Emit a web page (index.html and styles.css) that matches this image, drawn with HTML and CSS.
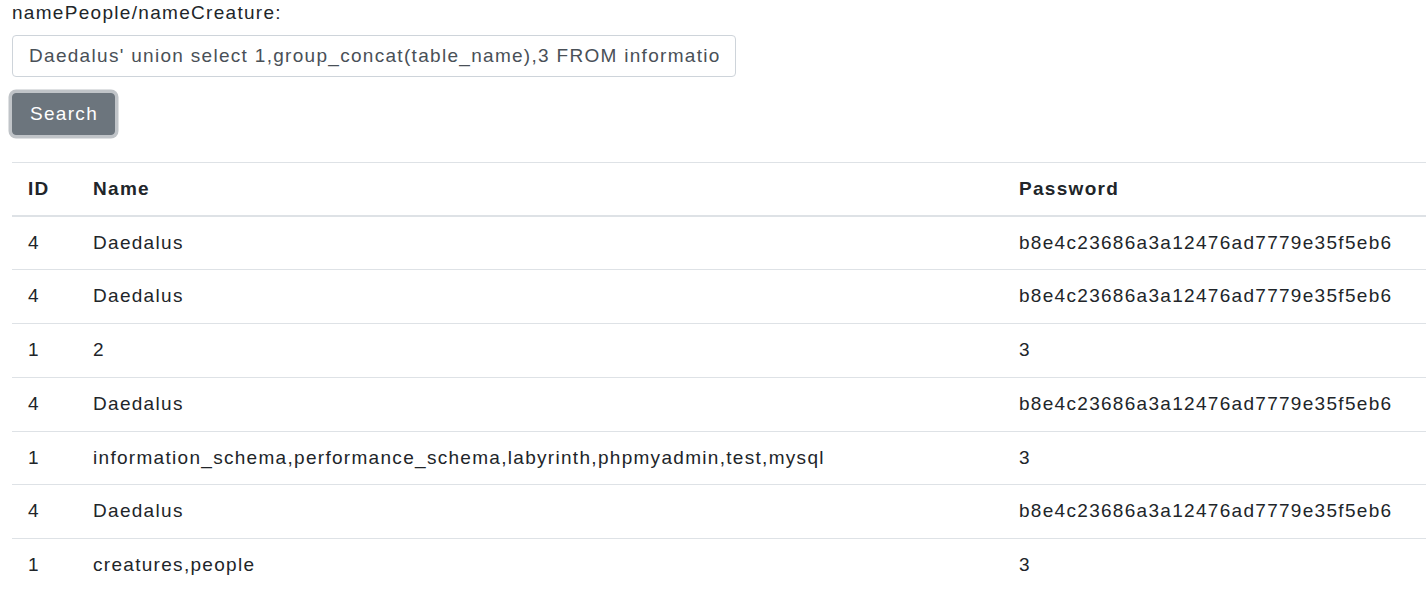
FILE: index.html
```html
<!DOCTYPE html>
<html lang="en">
<head>
<meta charset="utf-8">
<title>Search</title>
<link rel="stylesheet" href="styles.css">
</head>
<body>
<div class="page">
  <form class="search-form">
    <label class="field-label" for="name">namePeople/nameCreature:</label>
    <input class="field-input" id="name" type="text" value="Daedalus' union select 1,group_concat(table_name),3 FROM information_schema.tables where table_schema=database()-- -">
    <button class="btn-search" type="button">Search</button>
  </form>
  <table class="results">
    <thead>
      <tr><th class="col-id">ID</th><th class="col-name">Name</th><th class="col-pass">Password</th></tr>
    </thead>
    <tbody>
      <tr><td>4</td><td>Daedalus</td><td>b8e4c23686a3a12476ad7779e35f5eb6</td></tr>
      <tr><td>4</td><td>Daedalus</td><td>b8e4c23686a3a12476ad7779e35f5eb6</td></tr>
      <tr><td>1</td><td>2</td><td>3</td></tr>
      <tr><td>4</td><td>Daedalus</td><td>b8e4c23686a3a12476ad7779e35f5eb6</td></tr>
      <tr><td>1</td><td>information_schema,performance_schema,labyrinth,phpmyadmin,test,mysql</td><td>3</td></tr>
      <tr><td>4</td><td>Daedalus</td><td>b8e4c23686a3a12476ad7779e35f5eb6</td></tr>
      <tr><td>1</td><td>creatures,people</td><td>3</td></tr>
    </tbody>
  </table>
</div>
</body>
</html>
```
FILE: styles.css
```css
html, body {
  margin: 0;
  padding: 0;
  background: #fff;
  overflow: hidden;
}
body {
  font-family: "Liberation Sans", Arial, sans-serif;
  font-size: 19px;
  letter-spacing: 1.3px;
  color: #212529;
}
.page {
  padding-left: 12px;
}
.search-form {
  display: flex;
  flex-direction: column;
  align-items: flex-start;
}
.field-label {
  display: block;
  line-height: 26px;
  margin: 0 0 9px 0;
}
.field-input {
  box-sizing: border-box;
  width: 724px;
  height: 42px;
  padding: 0 16px 0 16px;
  border: 1px solid #ced4da;
  border-radius: 4px;
  font-family: inherit;
  font-size: 19px;
  letter-spacing: 1.3px;
  color: #495057;
  background: #fff;
  outline: none;
  margin: 0;
}
.btn-search {
  box-sizing: border-box;
  margin-top: 16px;
  width: 103px;
  height: 42px;
  padding: 0 0 0 17px;
  text-align: left;
  border: 1px solid #6c757d;
  border-radius: 4px;
  background: #6c757d;
  color: #fff;
  font-family: inherit;
  font-size: 19px;
  letter-spacing: 1.3px;
  box-shadow: 0 0 0 3.5px rgba(130, 138, 145, 0.5);
}
.results {
  margin-top: 27px;
  width: 1414px;
  border-collapse: collapse;
  table-layout: fixed;
}
.results th,
.results td {
  text-align: left;
  padding: 13px 16px;
  line-height: 26.7px;
  border-top: 1px solid #dee2e6;
  vertical-align: top;
  white-space: nowrap;
}
.results th {
  font-weight: bold;
  border-bottom: 2px solid #dee2e6;
  line-height: 25.7px;
}
.results thead + tbody tr:first-child td {
  border-top: 0;
}
.col-id { width: 33px; }
.col-name { width: 894px; }
.col-pass { width: auto; }
```
